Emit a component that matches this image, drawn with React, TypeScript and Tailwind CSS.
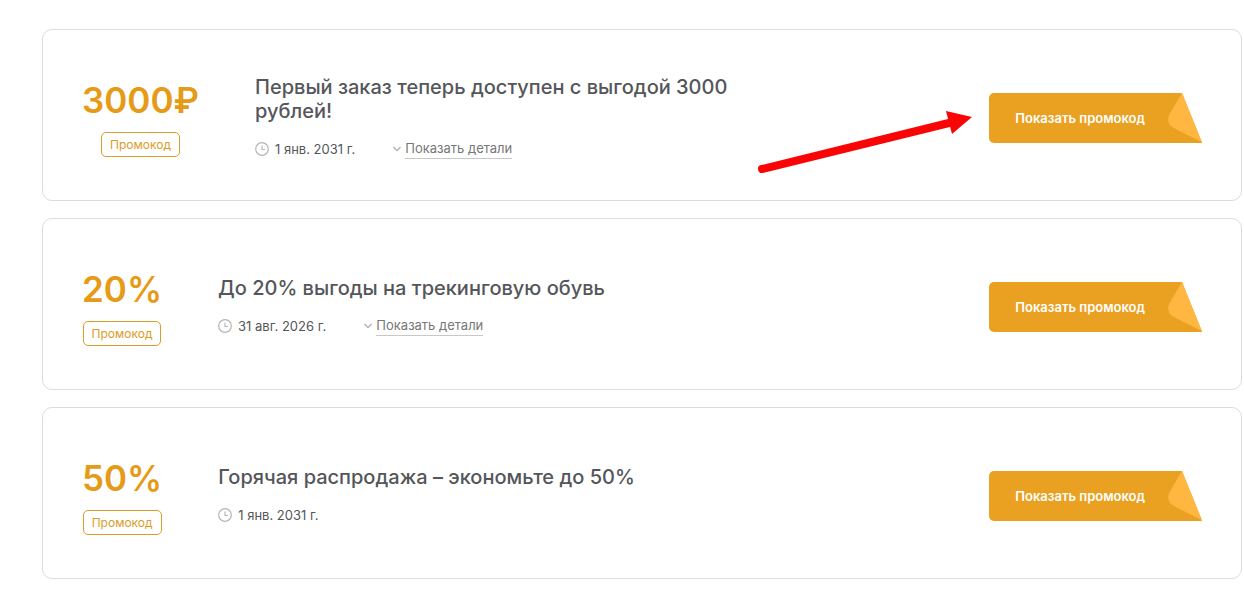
type Coupon = { value: string; title: string; until: string; details: boolean }

const coupons: Coupon[] = [
  {
    value: "3000₽",
    title: "Первый заказ теперь доступен с выгодой 3000 рублей!",
    until: "1 янв. 2031 г.",
    details: true,
  },
  {
    value: "20%",
    title: "До 20% выгоды на трекинговую обувь",
    until: "31 авг. 2026 г.",
    details: true,
  },
  {
    value: "50%",
    title: "Горячая распродажа – экономьте до 50%",
    until: "1 янв. 2031 г.",
    details: false,
  },
]

function ClockIcon() {
  return (
    <svg width="14" height="14" viewBox="0 0 14 14" fill="none" stroke="#b5b5b5" aria-hidden="true">
      <circle cx="7" cy="7" r="6.3" strokeWidth="1.2" />
      <path d="M7 3.5V7.5H10" strokeWidth="1.1" />
    </svg>
  )
}

function ChevronIcon() {
  return (
    <svg width="8" height="6" viewBox="0 0 8 6" fill="none" stroke="#a8a8a8" aria-hidden="true">
      <path d="M0.5 1L4 4.6L7.5 1" strokeWidth="1.1" />
    </svg>
  )
}

// Кнопка с отогнутым уголком справа
function PromoButton() {
  return (
    <button type="button" className="flex h-[50px] shrink-0 cursor-pointer text-white">
      <span className="flex h-full items-center rounded-l-[5px] bg-[#eaa121] pr-[22px] pl-[26px] text-[13px] leading-5 font-semibold">
        Показать промокод
      </span>
      <svg width="36" height="50" viewBox="0 0 36 50" className="-ml-px" aria-hidden="true">
        <path d="M0 0H16L36 50H0Z" fill="#eaa121" />
        <path d="M16 0L3 22Q0.500 29 5 33Q7 35 36 49Z" fill="#ffb742" />
      </svg>
    </button>
  )
}

function CouponCard({ coupon }: { coupon: Coupon }) {
  return (
    <li className="flex min-h-[172px] items-center rounded-[10px] border border-[#dcdcdc] px-[39px] pt-[6px]">
      <div className="flex shrink-0 flex-col items-center gap-[11px]">
        <div className="text-[35px] leading-[42px] font-semibold text-[#e69b17]">
          {coupon.value}
        </div>
        <div className="rounded-[5px] border border-[#dc9c28] px-2 text-xs leading-[23px] text-[#dc9c28]">
          Промокод
        </div>
      </div>

      <div className="ml-14 min-w-0 flex-1">
        <h3 className="max-w-[500px] text-xl leading-6 font-medium text-[#55565a]">
          {coupon.title}
        </h3>
        <div className="mt-[13px] flex h-[26px] items-center text-[13px] leading-5">
          <span className="flex items-center gap-[6px] text-[#55565a]">
            <ClockIcon />
            {coupon.until}
          </span>
          {coupon.details && (
            <button
              type="button"
              className="ml-[38px] flex cursor-pointer items-center gap-1 text-[#777777]"
            >
              <ChevronIcon />
              <span className="border-b border-[#c8c8c8]">Показать детали</span>
            </button>
          )}
        </div>
      </div>

      <PromoButton />
    </li>
  )
}

export default function App() {
  return (
    <main className="relative bg-white pt-[29px] pr-[2px] pb-[14px] pl-[42px] font-['Inter',sans-serif]">
      <ul className="flex flex-col gap-[17px]">
        {coupons.map((c) => (
          <CouponCard key={c.title} coupon={c} />
        ))}
      </ul>

      {/* Стрелка поверх первой карточки, указывает на кнопку */}
      <svg
        width="216"
        height="66"
        viewBox="0 0 216 66"
        className="absolute top-[109px] right-[271px]"
        aria-hidden="true"
      >
        <path d="M5 60L196 13" stroke="#fa0505" strokeWidth="8" strokeLinecap="round" />
        <path d="M189 2L215 8L195 25Z" fill="#fa0505" />
      </svg>
    </main>
  )
}
